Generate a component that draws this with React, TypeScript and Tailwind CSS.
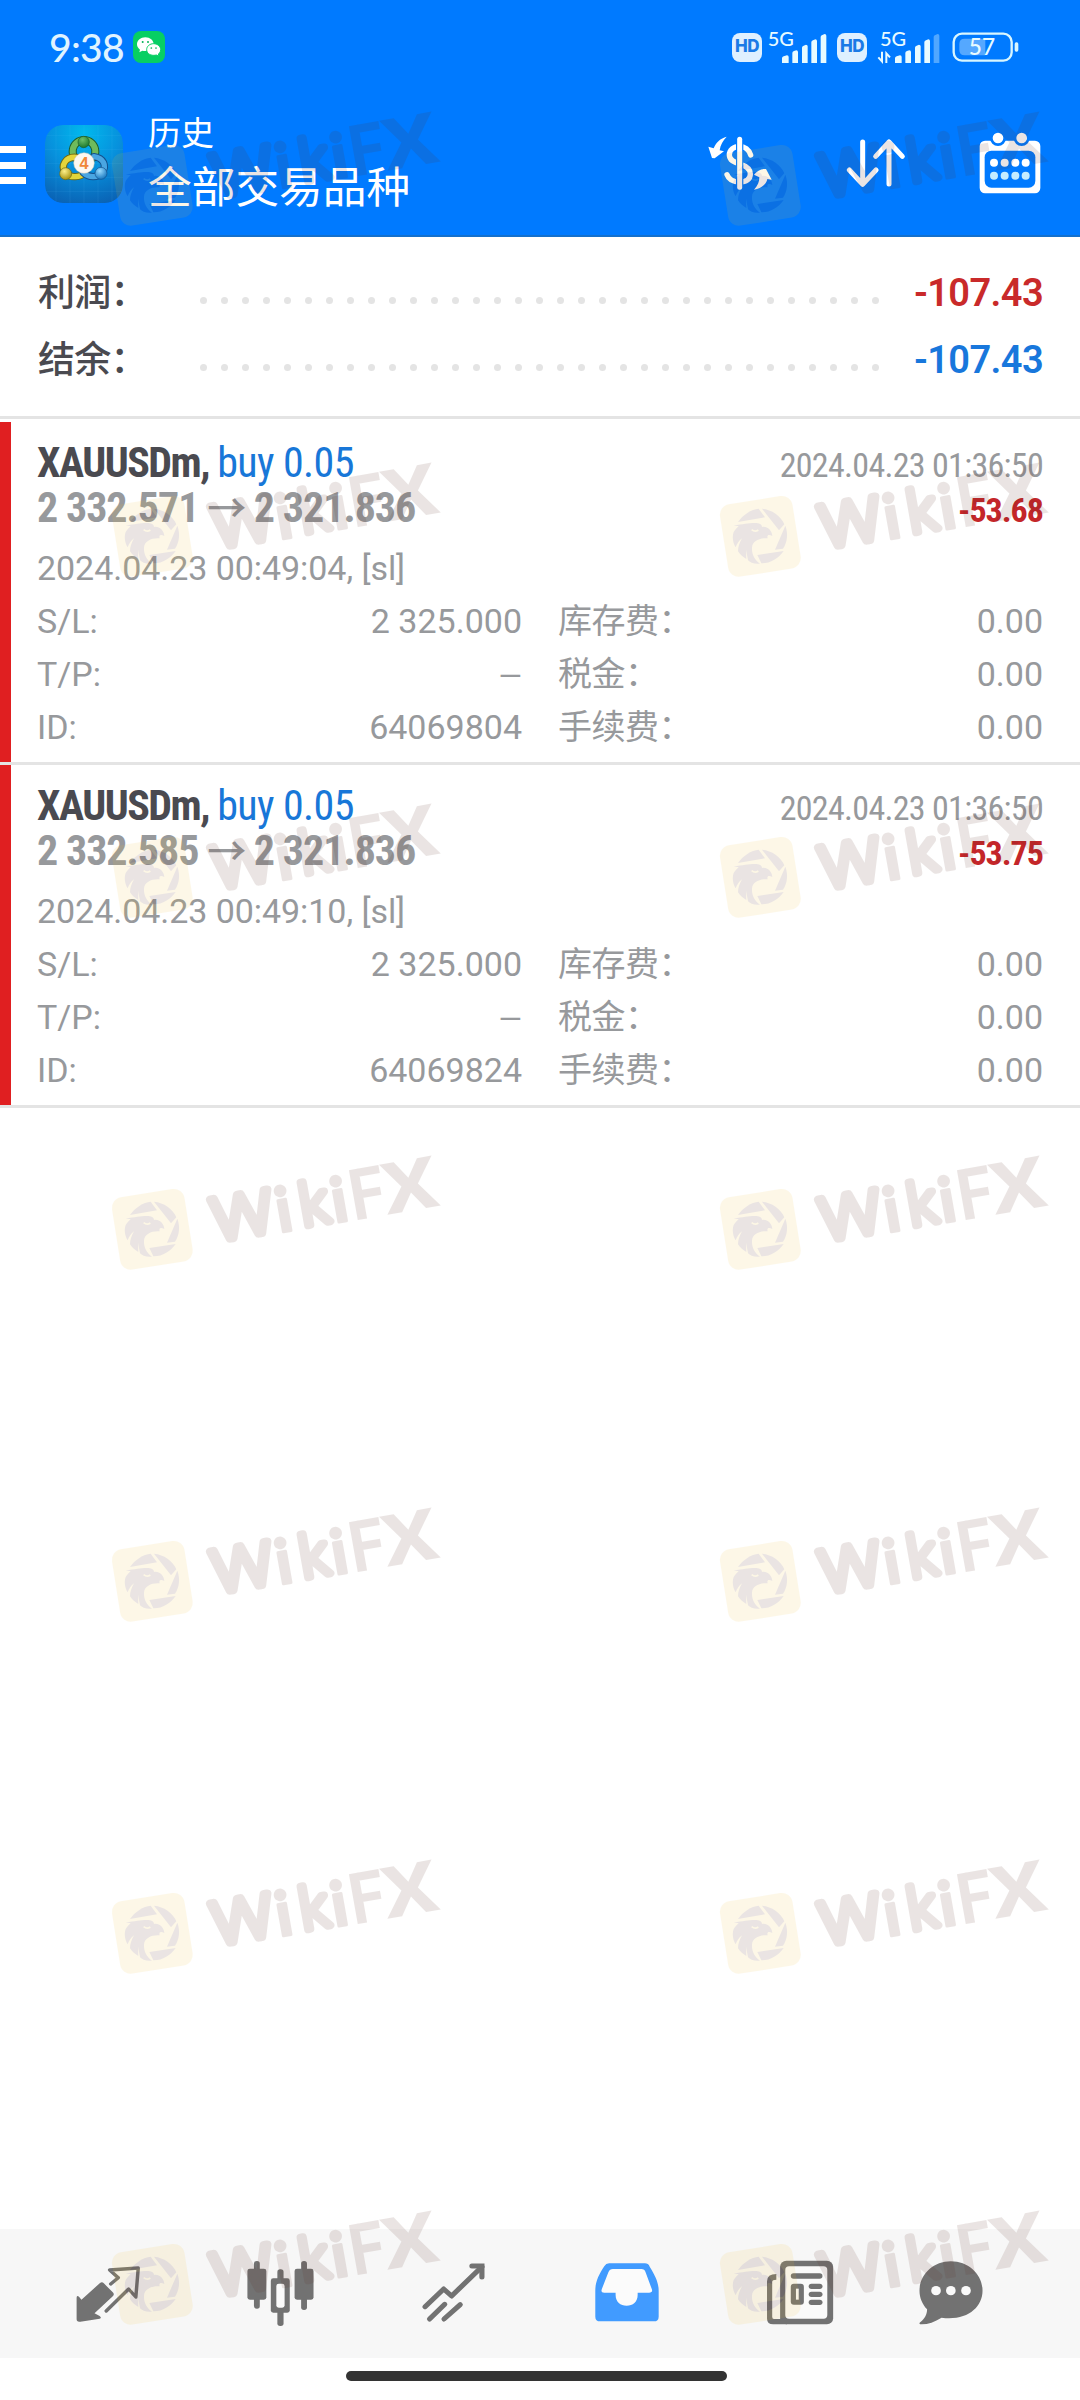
import type { ReactNode } from 'react';

type Trade = {
  id: string;
  open: string;
  close: string;
  openTime: string;
  closeTime: string;
  profit: string;
};

const trades: Trade[] = [
  { id: '64069804', open: '2 332.571', close: '2 321.836', openTime: '2024.04.23 00:49:04, [sl]', closeTime: '2024.04.23 01:36:50', profit: '-53.68' },
  { id: '64069824', open: '2 332.585', close: '2 321.836', openTime: '2024.04.23 00:49:10, [sl]', closeTime: '2024.04.23 01:36:50', profit: '-53.75' },
];

const watermarkRows = [106, 457, 798, 1150, 1502, 1854, 2205];

/* ---------- status bar ---------- */

function HdBadge() {
  return (
    <span className="flex h-[29px] w-[30px] items-center justify-center rounded-[8px] bg-[#dff0ff] font-['Inter'] text-[17px] font-extrabold tracking-[-0.5px] text-[#1b7ae6]">
      HD
    </span>
  );
}

function Signal({ weak = false }: { weak?: boolean }) {
  return (
    <svg className="overflow-visible" width="60" height="36" viewBox="260 82 180 108" fill="#e8fbff">
      <text x={weak ? 260 : 262} y="132" fontSize="60" fontFamily="Lato, sans-serif" fontWeight="500">5G</text>
      {weak && (
        <g fill="none" stroke="#e8fbff" strokeWidth="6">
          <path d="M266 150v29l-11-12M279 184v-29l11 12" />
        </g>
      )}
      <path d="M305 170q0-5 5-6l10-3q5 0 5 5v18h-20z" />
      <path d="M336 154q0-5 5-6l7-2q5 0 5 5v33h-17z" />
      <path d="M365 138q0-5 5-6l7-3q5 0 5 5v50h-17z" />
      <path d="M393 122q0-5 5-6l7-3q5 0 5 5v66h-17z" />
      <path d="M421 106q0-5 5-6l7-3q5 0 5 5v82h-17z" opacity={weak ? 0.35 : 1} />
    </svg>
  );
}

function Battery() {
  return (
    <svg className="overflow-visible" width="67" height="30" viewBox="815 94 201 90">
      <rect x="820" y="99" width="174" height="81" rx="25" fill="none" stroke="#d8f6ff" strokeWidth="7" />
      <path d="M853 114h62v50h-62q-16 0-16-16v-18q0-16 16-16z" fill="#55a8ff" />
      <rect x="1003" y="125" width="11" height="28" rx="5" fill="#d8f6ff" />
      <text x="905" y="164" textAnchor="middle" fontSize="68" fontFamily="Lato, sans-serif" fontWeight="500" fill="#e8fbff">57</text>
    </svg>
  );
}

function WeChat() {
  return (
    <svg width="32" height="32" viewBox="399 93 96 96">
      <rect x="399" y="93" width="96" height="96" rx="24" fill="#07cf63" />
      <path d="M436 112c-14 0-25 9-25 21 0 7 4 12 9 16l-2 8 9-5c3 1 6 1 9 1 13 0 25-8 25-20s-11-21-25-21z" fill="#fff" />
      <path d="M461 131c11 0 21 8 21 18 0 6-3 10-7 13l2 7-8-4c-3 1-5 1-8 1-12 0-21-7-21-17s9-18 21-18z" fill="#fff" stroke="#07cf63" strokeWidth="3" />
      <g fill="#07b458">
        <circle cx="428" cy="126" r="3" />
        <circle cx="444" cy="126" r="3" />
        <circle cx="454" cy="144" r="2.6" />
        <circle cx="468" cy="144" r="2.6" />
      </g>
    </svg>
  );
}

/* ---------- header ---------- */

function AppLogo() {
  return (
    <svg className="rounded-[18px]" width="78" height="78" viewBox="15 15 234 234">
      <defs>
        <radialGradient id="logo-bg" cx="0.5" cy="0.1" r="0.95">
          <stop offset="0" stopColor="#00b9ee" />
          <stop offset="0.5" stopColor="#0790dc" />
          <stop offset="1" stopColor="#0a62b4" />
        </radialGradient>
        <radialGradient id="logo-green" cx="0.4" cy="0.3" r="0.7">
          <stop offset="0" stopColor="#6fc06a" />
          <stop offset="1" stopColor="#1e7a2e" />
        </radialGradient>
        <radialGradient id="logo-yellow" cx="0.4" cy="0.3" r="0.7">
          <stop offset="0" stopColor="#fdf08a" />
          <stop offset="1" stopColor="#a89410" />
        </radialGradient>
        <radialGradient id="logo-blue" cx="0.4" cy="0.3" r="0.7">
          <stop offset="0" stopColor="#9adcff" />
          <stop offset="1" stopColor="#1878c0" />
        </radialGradient>
      </defs>
      <rect x="15" y="15" width="234" height="234" rx="54" fill="url(#logo-bg)" />
      <path d="M15 46h234M15 88h234M15 130h234M15 172h234M15 214h234M48 15v234M90 15v234M132 15v234M174 15v234M216 15v234" stroke="#5cc8ff" strokeOpacity="0.16" strokeWidth="2" />
      <g fill="none" strokeLinecap="round">
        <path d="M103 112A34 34 0 1 1 161 112" stroke="#1c5d2c" strokeWidth="24" />
        <path d="M103 112A34 34 0 1 1 161 112" stroke="#6fbb5c" strokeWidth="18" />
        <path d="M108 112C78 110 60 135 76 160C90 175 122 172 134 158" stroke="#6d6a18" strokeWidth="22" />
        <path d="M108 112C78 110 60 135 76 160C90 175 122 172 134 158" stroke="#e3d43a" strokeWidth="16" />
        <path d="M162 110C190 114 202 136 186 158C174 174 146 174 130 158" stroke="#14528e" strokeWidth="22" />
        <path d="M162 110C190 114 202 136 186 158C174 174 146 174 130 158" stroke="#4aa6e2" strokeWidth="16" />
      </g>
      <circle cx="131" cy="66" r="17" fill="url(#logo-green)" stroke="#1c5d2c" strokeWidth="2" />
      <circle cx="77" cy="161" r="18" fill="url(#logo-yellow)" stroke="#6d6a18" strokeWidth="2" />
      <circle cx="183" cy="160" r="18" fill="url(#logo-blue)" stroke="#14528e" strokeWidth="2" />
      <circle cx="132" cy="129" r="31" fill="#fbf8f2" stroke="#c9c4b0" strokeWidth="1.5" />
      <text x="132" y="146" textAnchor="middle" fontSize="49" fontFamily="'Liberation Sans', sans-serif" fontWeight="700" fill="#f0873a">4</text>
    </svg>
  );
}

function CurrencyIcon() {
  return (
    <svg width="66" height="60" viewBox="20 40 198 180" fill="#fff">
      <path d="M151 106C146 90 132 80 118 80C100 80 87 91 87 106C87 122 102 128 118 133C138 139 150 147 150 163C150 178 138 187 118 187C100 187 85 179 80 165" fill="none" stroke="#fff" strokeWidth="16" strokeLinecap="round" />
      <path d="M118 52V210" stroke="#007aff" strokeWidth="22" />
      <path d="M118 59V203" stroke="#fff" strokeWidth="15" strokeLinecap="round" />
      <path d="M79 51C60 56 47 68 40 86L24 81L35 115L43 116L71 95L58 92C60 76 68 62 79 51Z" />
      <path d="M161 210C173 198 177 186 177 173L161 165C170 153 184 146 197 148L214 180L201 178C198 193 184 206 161 210Z" />
    </svg>
  );
}

function SortIcon() {
  return (
    <svg width="60" height="52" viewBox="497 412 180 156" fill="none" stroke="#fff" strokeWidth="15" strokeLinecap="round" strokeLinejoin="round">
      <path d="M547 427V553M507 511L547 554L587 511" />
      <path d="M626 553V428M586 470L626 427L666 470" />
    </svg>
  );
}

function CalendarIcon() {
  return (
    <svg width="62" height="62" viewBox="898 394 186 186">
      <rect x="900" y="420" width="182" height="158" rx="16" fill="#fff" />
      <rect x="915" y="450" width="152" height="111" rx="20" fill="#007aff" />
      <g fill="#fff" stroke="#007aff" strokeWidth="8">
        <circle cx="955" cy="412" r="20" />
        <circle cx="1026" cy="412" r="20" />
      </g>
      <g fill="#fff">
        {[943, 975, 1007, 1038].map(cx => <circle key={cx} cx={cx} cy="486" r="12" />)}
      </g>
      <g fill="#c4ecff">
        {[943, 975, 1007, 1038].map(cx => <circle key={cx} cx={cx} cy="525" r="12" />)}
      </g>
    </svg>
  );
}

function Header() {
  return (
    <header className="h-[237px] border-b-2 border-[#1470cc] bg-[#007aff]">
      <div className="flex h-[94px] items-center pl-[49px] pr-[61px]">
        <span className="font-['Lato'] text-[39px] font-medium leading-none tracking-[-0.7px] text-[#e0f4ff]">9:38</span>
        <span className="ml-[9px]"><WeChat /></span>
        <div className="ml-auto flex items-center">
          <HdBadge />
          <span className="ml-[5px]"><Signal /></span>
          <span className="ml-[10px]"><HdBadge /></span>
          <span className="ml-[13px]"><Signal weak /></span>
          <span className="ml-[12px]"><Battery /></span>
        </div>
      </div>
      <div className="flex h-[140px] items-center">
        <div className="mt-[2px] flex flex-col gap-[8.5px]">
          <span className="h-[7px] w-[26px] bg-white" />
          <span className="h-[7px] w-[26px] bg-white" />
          <span className="h-[7px] w-[26px] bg-white" />
        </div>
        <span className="ml-[19px]"><AppLogo /></span>
        <div className="ml-[25px] flex flex-col pb-[3px] text-white">
          <span className="text-[33px] leading-[50px]">历史</span>
          <span className="text-[43.7px] leading-[58px]">全部交易品种</span>
        </div>
        <div className="ml-auto flex items-center pb-[3px] pr-[39px]">
          <CurrencyIcon />
          <span className="ml-[73px]"><SortIcon /></span>
          <span className="ml-[73px]"><CalendarIcon /></span>
        </div>
      </div>
    </header>
  );
}

/* ---------- content ---------- */

function SummaryRow({ label, value, color }: { label: string; value: string; color: string }) {
  return (
    <div className="flex h-[67px] items-center leading-[67px]">
      <span className="w-[162px] text-[37px] font-medium tracking-[-0.8px] text-[#4a4a50]">{label}</span>
      <span className="mt-[13px] flex w-[679px] justify-between">
        {Array.from({ length: 33 }, (_, i) => (
          <i key={i} className="size-[7px] rounded-full bg-[#e4e4e4]" />
        ))}
      </span>
      <span className={`ml-auto text-[38px] font-semibold tracking-[-0.6px] ${color}`}>{value}</span>
    </div>
  );
}

function DetailRow({ label, value, label2, value2 }: { label: string; value: ReactNode; label2: string; value2: string }) {
  return (
    <div className="flex h-[53px]">
      <div className="flex w-[485px] justify-between">
        <span>{label}</span>
        <span>{value}</span>
      </div>
      <div className="ml-[36px] flex flex-1 justify-between">
        <span className="tracking-[-0.5px]">{label2}</span>
        <span>{value2}</span>
      </div>
    </div>
  );
}

function TradeCard({ trade }: { trade: Trade }) {
  return (
    <div className="border-b-[3px] border-[#e4e4e4]">
      <div className="flex h-[340px]">
        <div className="w-[11px] bg-[#e01f21]" />
        <div className="flex-1 pl-[26px] pr-[37px] pt-[18px] text-[34px] leading-[53px] text-[#97999c]">
          <div className="flex h-[45px] items-baseline justify-between font-['Roboto_Condensed','Noto_Sans_CJK_SC',sans-serif] leading-[45px]">
            <span className="text-[42px] tracking-[-1.5px]">
              <b className="font-bold text-[#4a4a50]">XAUUSDm,</b>{' '}
              <span className="tracking-[-0.6px] text-[#1877d8]">buy 0.05</span>
            </span>
            <span className="tracking-[-0.7px]">{trade.closeTime}</span>
          </div>
          <div className="mb-3 flex h-[45px] items-baseline justify-between font-['Roboto_Condensed','Noto_Sans_CJK_SC',sans-serif] font-bold leading-[45px]">
            <span className="text-[42px] tracking-[-1px]">
              {trade.open} <span className="font-['Noto_Sans_CJK_SC'] text-[39px] font-medium leading-none">→</span> {trade.close}
            </span>
            <span className="tracking-[-1px] text-[#c42629]">{trade.profit}</span>
          </div>
          <div className="h-[53px] tracking-[-0.05px]">{trade.openTime}</div>
          <DetailRow label="S/L:" value="2 325.000" label2="库存费：" value2="0.00" />
          <DetailRow label="T/P:" value={<span className="text-[30px]">—</span>} label2="税金：" value2="0.00" />
          <DetailRow label="ID:" value={trade.id} label2="手续费：" value2="0.00" />
        </div>
      </div>
    </div>
  );
}

/* ---------- bottom navigation ---------- */

function NavIcon({ viewBox, children }: { viewBox: string; children: ReactNode }) {
  return (
    <svg width="80" height="80" viewBox={viewBox} preserveAspectRatio="none" fill="#727272">
      {children}
    </svg>
  );
}

function BottomNav() {
  return (
    <nav className="flex h-[129px] items-center bg-[#f7f7f7] pl-[21px]">
      <div className="flex w-[173px] justify-center">
        <NavIcon viewBox="196 160 232.3 240">
          <path d="M221 291q0-8 7-3l7 9 54-50q6-5 11 1l26 27q6 6 0 12l-53 51 15 8q7 6 0 8l-56 9q-11 2-11-7z" />
          <path d="M320 250l22-19-25-23 83-6-7 87-21-24-65 66" fill="none" stroke="#727272" strokeWidth="10" strokeLinejoin="round" strokeLinecap="round" />
        </NavIcon>
      </div>
      <div className="flex w-[173px] justify-center">
        <NavIcon viewBox="698.4 160 232.3 240">
          <rect x="736" y="181" width="17" height="143" rx="8" />
          <rect x="717" y="204" width="55" height="93" rx="7" />
          <rect x="873" y="181" width="17" height="147" rx="8" />
          <rect x="854" y="204" width="55" height="93" rx="7" />
          <rect x="804" y="206" width="18" height="170" rx="8" />
          <rect x="785" y="233" width="55" height="103" rx="7" />
          <rect x="801" y="249" width="24" height="72" rx="7" fill="#fafafa" />
        </NavIcon>
      </div>
      <div className="flex w-[173px] justify-center">
        <NavIcon viewBox="1200.8 160 232.3 240">
          <g fill="none" stroke="#727272" strokeWidth="15" strokeLinecap="round" strokeLinejoin="round">
            <path d="M1233 318L1287 265L1310 286L1398 198" />
            <path d="M1369 196H1398V229" strokeLinejoin="miter" />
            <path d="M1246 355L1290 311M1288 355L1335 312" />
          </g>
        </NavIcon>
      </div>
      <div className="flex w-[172px] justify-center">
        <NavIcon viewBox="135 160 232.3 240">
          <path d="M202 188H306Q316 188 320 198C335 224 346 244 346 270V348Q346 362 332 362H176Q162 362 162 348V270C162 244 172 222 188 197Q193 188 202 188Z" fill="#419bff" />
          <path d="M213 205Q204 205 200 215L181 265Q177 276 188 276H221V283C221 304 235 315 253 315S285 304 285 283V276H318Q330 276 326 265L308 215Q305 205 296 205Z" fill="#fbfbfb" />
        </NavIcon>
      </div>
      <div className="flex w-[176px] justify-center">
        <NavIcon viewBox="643.6 160 232.3 240">
          <path d="M691 220q-27 0-27 22v112q0 17 18 17h40v-16h-38q-5 0-5-7V244q0-7 12-7z" />
          <rect x="702" y="180" width="154" height="191" rx="18" />
          <rect x="717" y="197" width="122" height="157" rx="11" fill="#fafafa" />
          <rect x="733" y="218" width="92" height="16" rx="8" />
          <rect x="733" y="249" width="38" height="63" rx="9" />
          <rect x="748" y="264" width="8" height="33" fill="#fafafa" />
          <rect x="785" y="249" width="40" height="16" rx="8" />
          <rect x="785" y="273" width="40" height="16" rx="8" />
          <rect x="785" y="297" width="40" height="16" rx="8" />
        </NavIcon>
      </div>
      <div className="flex w-[126px] justify-center">
        <NavIcon viewBox="1077.3 160 232.3 240">
          <path d="M1193 182C1245 182 1285 222 1285 270C1285 320 1240 361 1166 351C1145 364 1125 372 1105 371C1101 371 1101 367 1104 365C1117 355 1124 342 1124 326C1110 310 1102 292 1102 270C1102 222 1142 182 1193 182Z" />
          <g fill="#fafafa">
            <circle cx="1150" cy="270" r="14" />
            <circle cx="1193" cy="270" r="14" />
            <circle cx="1237" cy="270" r="14" />
          </g>
        </NavIcon>
      </div>
    </nav>
  );
}

/* ---------- tiled watermark ---------- */

function Watermark() {
  return (
    <svg className="overflow-visible" width="334" height="123" viewBox="60 60 1002 369" opacity="0.12">
      <g transform="translate(187 298) rotate(-9)">
        <rect x="-110" y="-110" width="220" height="220" rx="32" fill="#f2bf30" opacity="0.9" />
      </g>
      <g fill="#5a2d22">
        <path d="M120 255C134 234 160 216 182 215L201 241Z" />
        <path d="M192 215C222 218 248 236 259 262L243 280Z" />
        <path d="M262 266C271 290 268 315 255 335L231 338Z" />
        <path d="M178 354L257 342C242 364 216 380 190 379Z" />
        <path d="M107 265C135 262 150 258 170 258C184 258 192 262 192 270C205 266 222 278 223 297C212 291 206 294 209 304C186 302 163 312 162 332C161 352 170 368 186 380C168 382 156 376 150 370L144 338L145 366C134 360 126 352 120 343C120 330 124 318 132 304C122 312 117 321 113 331C104 316 102 298 107 285C112 277 116 273 122 268Z" />
      </g>
      <path d="M161 278q10 8 20 1" fill="none" stroke="#f2bf30" strokeWidth="5" />
      <g transform="translate(187.5 298.5) rotate(-10)" fill="#5a2d22" stroke="#5a2d22" strokeLinejoin="round" fontFamily="Roboto, sans-serif">
        <text x="181" y="68" fontSize="178" fontWeight="200" strokeWidth="24" textLength="184" lengthAdjust="spacingAndGlyphs">W</text>
        <text x="374" y="75" fontSize="185" fontWeight="700" strokeWidth="9" fontFamily="Lato, sans-serif">i</text>
        <text x="448" y="68" fontSize="173" fontWeight="200" strokeWidth="24">k</text>
        <text x="543" y="75" fontSize="185" fontWeight="700" strokeWidth="9" fontFamily="Lato, sans-serif">i</text>
        <text x="599" y="79" fontSize="214" fontWeight="700" strokeWidth="0" textLength="106" lengthAdjust="spacingAndGlyphs">F</text>
        <text x="699" y="79" fontSize="214" fontWeight="700" strokeWidth="0" textLength="168" lengthAdjust="spacingAndGlyphs">X</text>
      </g>
    </svg>
  );
}

export default function App() {
  return (
    <div className="relative flex h-[2400px] w-[1080px] flex-col overflow-hidden bg-white font-['Roboto','Noto_Sans_CJK_SC',sans-serif]" lang="zh-CN">
      <Header />
      <section className="mb-[3px] h-[182px] border-b-[3px] border-[#e4e4e4] pl-[38px] pr-[37px] pt-[23px]">
        <SummaryRow label="利润：" value="-107.43" color="text-[#c92a2a]" />
        <SummaryRow label="结余：" value="-107.43" color="text-[#1877dc]" />
      </section>
      <main className="flex-1">
        {trades.map(t => <TradeCard key={t.id} trade={t} />)}
      </main>
      <BottomNav />
      <div className="flex h-[42px] justify-center pr-[7px] pt-[13px]">
        <div className="h-[10px] w-[381px] rounded-full bg-[#333333]" />
      </div>

      <div className="pointer-events-none absolute inset-0">
        {watermarkRows.map(top => (
          <div key={top} className="absolute left-[110px] flex gap-[274px]" style={{ top }}>
            <Watermark />
            <Watermark />
          </div>
        ))}
      </div>
    </div>
  );
}
